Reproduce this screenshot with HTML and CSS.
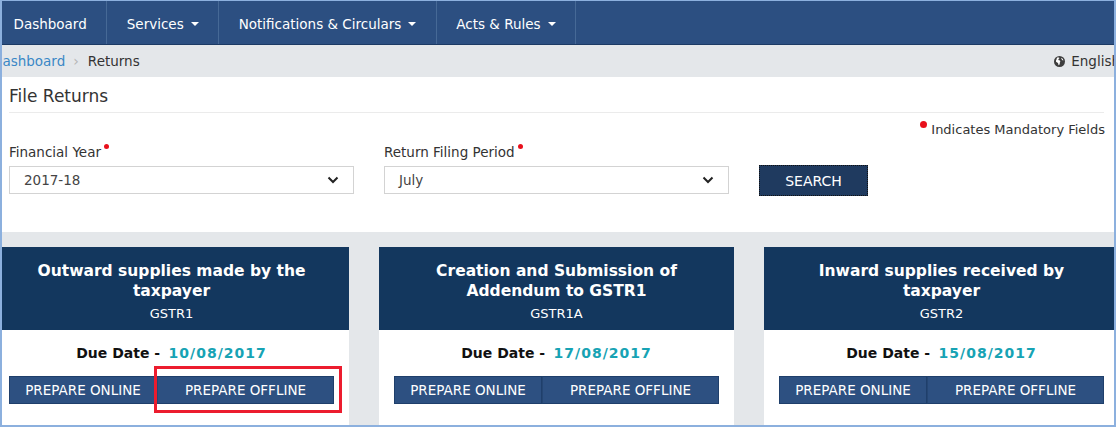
FILE: index.html
```html
<!DOCTYPE html>
<html>
<head>
<meta charset="utf-8">
<title>File Returns</title>
<link rel="stylesheet" href="styles.css">
</head>
<body>
<div class="frame">
  <div class="page">
    <nav class="topnav">
      <a class="nav-item">Dashboard</a>
      <a class="nav-item">Services <span class="caret"></span></a>
      <a class="nav-item">Notifications &amp; Circulars <span class="caret"></span></a>
      <a class="nav-item">Acts &amp; Rules <span class="caret"></span></a>
    </nav>
    <div class="crumbbar">
      <div class="crumbs">
        <a class="crumb-link">Dashboard</a>
        <span class="crumb-sep">&#8250;</span>
        <span class="crumb-current">Returns</span>
      </div>
      <div class="lang">
        <svg class="globe" width="11" height="11" viewBox="0 0 12 12">
          <circle cx="6" cy="6" r="6" fill="#3d3d3d"/>
          <path d="M3 2.2 C4 1.6 5.2 1.5 6 2.2 C5.6 3 4.6 3.1 4.8 4 C5.2 4.8 6.4 4.5 6.8 5.4 C7.1 6.4 6 7 6.3 8.1 C6.5 9 5.6 9.8 5 10 C4.6 9 4.8 8 4 7.4 C3.2 6.8 2 6.6 2.1 5.4 C2.2 4.2 3.4 3.6 3 2.2 Z" fill="#fff"/>
          <path d="M8 2 C9 2.6 10 3.6 10.2 4.8 C9.4 5 8.6 4.4 8.4 3.6 C8.2 3 7.6 2.6 8 2 Z" fill="#fff"/>
        </svg>
        <span>English</span>
      </div>
    </div>
    <main class="content">
      <h2 class="page-title">File Returns</h2>
      <div class="mandatory"><span class="req-dot"></span>Indicates Mandatory Fields</div>
      <div class="form-row">
        <div class="field">
          <label class="field-label">Financial Year<span class="req-dot small"></span></label>
          <div class="select">
            <span>2017-18</span>
            <svg width="12" height="8" viewBox="0 0 12 8"><polyline points="1.5,1.5 6,6 10.5,1.5" fill="none" stroke="#222" stroke-width="2"/></svg>
          </div>
        </div>
        <div class="field">
          <label class="field-label">Return Filing Period<span class="req-dot small"></span></label>
          <div class="select">
            <span>July</span>
            <svg width="12" height="8" viewBox="0 0 12 8"><polyline points="1.5,1.5 6,6 10.5,1.5" fill="none" stroke="#222" stroke-width="2"/></svg>
          </div>
        </div>
        <div class="search-col">
          <button class="search-btn">SEARCH</button>
        </div>
      </div>
    </main>
    <section class="cards">
      <div class="card">
        <div class="card-head">
          <div class="card-title">Outward supplies made by the taxpayer</div>
          <div class="card-sub">GSTR1</div>
        </div>
        <div class="card-body">
          <div class="due"><b>Due Date -</b> <span class="date">10/08/2017</span></div>
          <div class="btn-group">
            <button class="btn btn-online">PREPARE ONLINE</button>
            <button class="btn btn-offline">PREPARE OFFLINE<span class="highlight"></span></button>
          </div>
        </div>
      </div>
      <div class="card">
        <div class="card-head">
          <div class="card-title">Creation and Submission of Addendum to GSTR1</div>
          <div class="card-sub">GSTR1A</div>
        </div>
        <div class="card-body">
          <div class="due"><b>Due Date -</b> <span class="date">17/08/2017</span></div>
          <div class="btn-group">
            <button class="btn btn-online">PREPARE ONLINE</button>
            <button class="btn btn-offline">PREPARE OFFLINE</button>
          </div>
        </div>
      </div>
      <div class="card">
        <div class="card-head">
          <div class="card-title">Inward supplies received by taxpayer</div>
          <div class="card-sub">GSTR2</div>
        </div>
        <div class="card-body">
          <div class="due"><b>Due Date -</b> <span class="date">15/08/2017</span></div>
          <div class="btn-group">
            <button class="btn btn-online">PREPARE ONLINE</button>
            <button class="btn btn-offline">PREPARE OFFLINE</button>
          </div>
        </div>
      </div>
    </section>
  </div>
</div>
</body>
</html>
```
FILE: styles.css
```css
* { box-sizing: border-box; }
html, body { margin: 0; padding: 0; background: #fff; }
body { font-family: "DejaVu Sans", Verdana, sans-serif; color: #333; }

.frame {
  width: 1116px;
  height: 427px;
  overflow: hidden;
  border-top: 1px solid #8cb0de;
  border-left: 2px solid #8cb0de;
  border-right: 2px solid #8cb0de;
  border-bottom: 2px solid #8cb0de;
  background: #fff;
}
.page {
  margin-left: -8px;
  width: 1125px;
}

/* top navigation */
.topnav {
  display: flex;
  height: 44px;
  background: #2c4f81;
  border-bottom: 1px solid #1c3a64;
}
.nav-item {
  display: flex;
  align-items: center;
  padding: 3px 19.5px 0 19.5px;
  font-size: 13.5px;
  color: #fff;
  border-right: 1px solid #466996;
  white-space: nowrap;
}
.caret {
  display: inline-block;
  width: 0; height: 0;
  margin-left: 7px;
  border-left: 4px solid transparent;
  border-right: 4px solid transparent;
  border-top: 4px solid #fff;
}

/* breadcrumb */
.crumbbar {
  display: flex;
  justify-content: space-between;
  align-items: center;
  height: 32px;
  background: #e4e7ea;
  font-size: 13.5px;
}
.crumbs { display: flex; align-items: center; margin-left: -2px; }
.crumb-link { color: #3a87c6; }
.crumb-sep { color: #b5b5b5; margin: 0 9px 0 8px; font-size: 14px; }
.crumb-current { color: #333; }
.lang { display: flex; align-items: center; gap: 6px; margin-right: -1px; color: #333; }
.globe { display: block; }

/* content */
.content { padding: 8px 15px 36px; background: #fff; }
.page-title {
  margin: 0;
  font-size: 17px;
  font-weight: normal;
  line-height: 22px;
  padding-bottom: 5px;
  border-bottom: 1px solid #ebebeb;
  color: #333;
}
.mandatory {
  margin-top: 8px;
  text-align: right;
  font-size: 13px;
  line-height: 18px;
  color: #333;
  margin-right: -1px;
}
.req-dot {
  display: inline-block;
  width: 7px; height: 7px;
  border-radius: 50%;
  background: #e8101c;
  margin-right: 4px;
  vertical-align: 6px;
}
.req-dot.small { width: 5px; height: 5px; margin: 0 0 0 3px; vertical-align: 8px; }
.form-row { display: flex; gap: 30px; margin-top: 4px; }
.field { width: 345px; }
.field-label { display: block; font-size: 13.5px; line-height: 18px; color: #333; }
.select {
  margin-top: 5px;
  height: 28px;
  border: 1px solid #d3d3d3;
  display: flex;
  align-items: center;
  justify-content: space-between;
  padding: 0 14px 0 14px;
  font-size: 13.5px;
  color: #444;
  background: #fff;
}
.select svg { display: block; }
.search-col { padding-top: 22px; }
.search-btn {
  height: 31px;
  width: 109px;
  background: #1f3a5f;
  color: #fff;
  font-family: inherit;
  font-size: 14px;
  border: 1px dotted #111;
  padding: 0;
}

/* cards */
.cards {
  display: flex;
  gap: 30px;
  background: #e4e7ea;
  padding-top: 15px;
  height: 200px;
}
.card { width: 355px; flex-shrink: 0; background: #fff; }
.card-head {
  background: #13375e;
  color: #fff;
  text-align: center;
  padding: 14px 24px 7px;
  height: 83px;
}
.card-title { font-weight: bold; font-size: 15.5px; line-height: 20px; }
.card-sub { margin-top: 4px; font-size: 13px; line-height: 18px; }
.card-body { padding: 14px 15px 20px 15px; text-align: center; }
.due { font-size: 14px; line-height: 18px; color: #111; }
.due .date { color: #17a3b4; font-weight: bold; letter-spacing: 1px; margin-left: 4px; }
.btn-group { display: flex; margin-top: 14px; }
.btn {
  height: 28px;
  background: #2d5081;
  color: #fff;
  font-family: inherit;
  font-size: 13.5px;
  border: 1px solid #1f3f6b;
  padding: 0;
}
.btn-online { width: 148px; }
.btn-offline { flex: 1; position: relative; border-left: 1px solid #254673; }
.highlight {
  position: absolute;
  left: -4px; right: -9px; top: -11px; bottom: -10px;
  border: 3px solid #ec1c2e;
}
```
